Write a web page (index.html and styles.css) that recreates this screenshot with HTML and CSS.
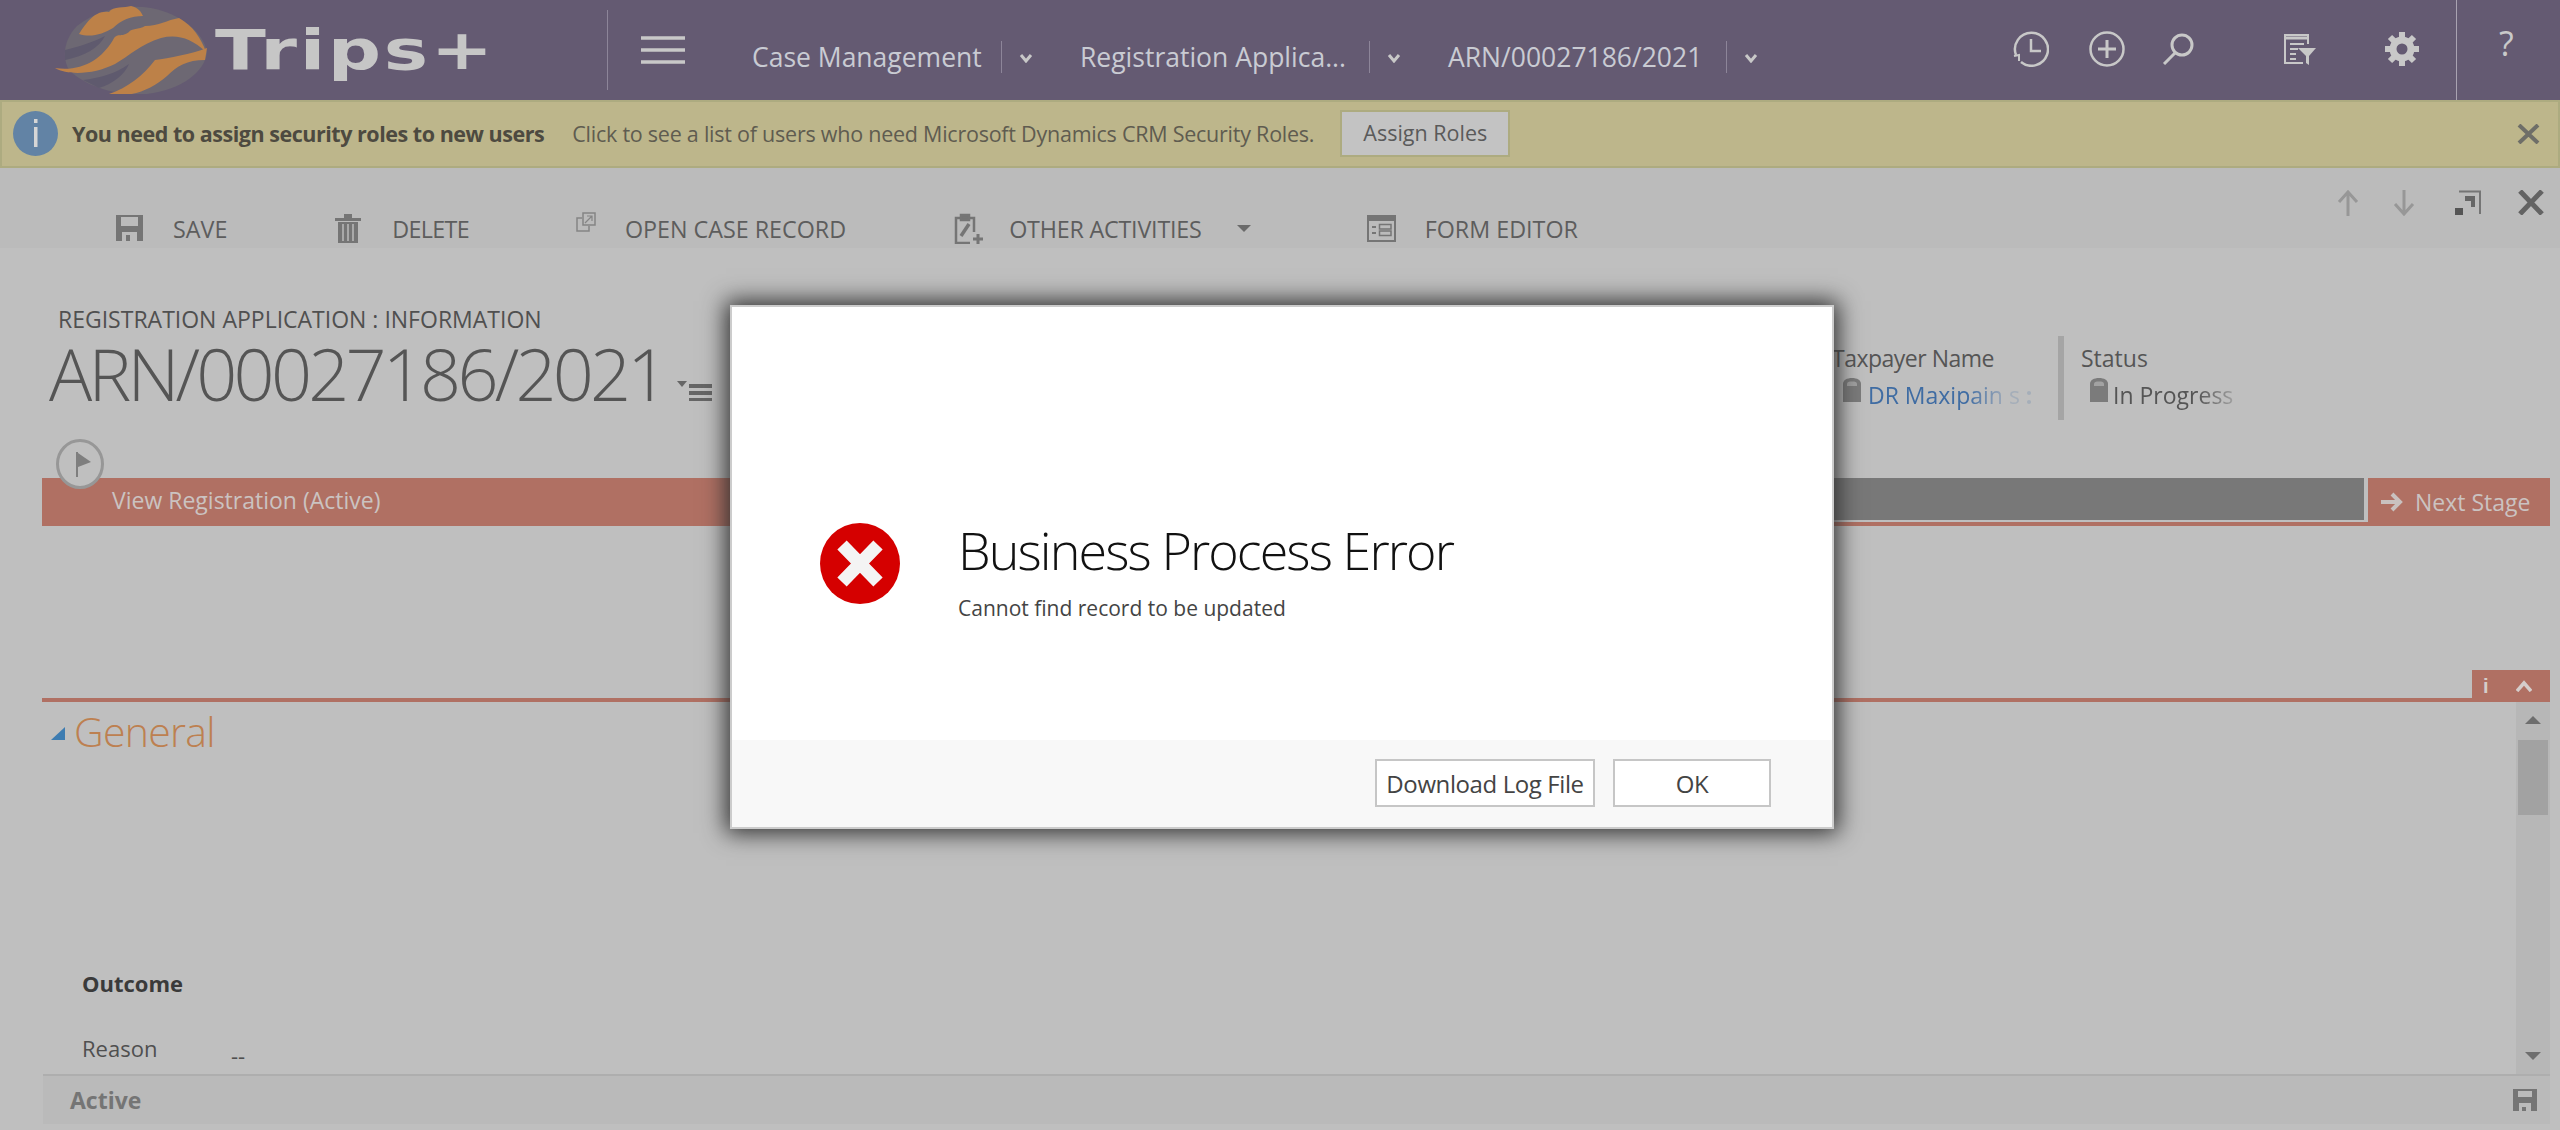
FILE: index.html
```html
<!DOCTYPE html>
<html>
<head>
	<title>ARN/00027186/2021</title>
	<link rel="stylesheet" href="styles.css">
</head>
<body>
	<header class="topbar">
		<div class="logo">
			<svg class="logo-globe" width="152" height="88" viewBox="0 0 152 88">
				<path d="M22 20C42 4 70 -2 96 2C126 8 148 26 152 46C150 66 126 84 92 88C60 90 30 80 14 64C6 50 10 32 22 20Z" fill="#6d6873"/>
				<path d="M0 62C26 66 46 54 58 34C62 26 66 32 74 26C76 22 84 24 90 20C104 20 112 14 124 12C138 20 146 32 151 46C136 32 122 28 106 32C86 38 74 50 60 58C40 68 14 70 0 62Z" fill="#bd8148"/>
				<path d="M54 88C72 82 88 70 100 54C114 52 136 48 152 42L150 54C132 54 122 60 112 70C96 84 76 92 54 88Z" fill="#bd8148"/>
				<path d="M24 28C32 16 40 4 54 6C58 0 70 2 76 0C84 2 86 6 88 10C76 10 66 14 58 22C48 28 36 32 24 28Z" fill="#bd8148"/>
				<path d="M10 44C26 40 38 36 50 30C44 42 30 50 10 54Z" fill="#5f5a6e"/>
				<path d="M28 74C44 72 60 68 74 58C70 68 58 78 44 82Z" fill="#5f5a6e"/>
			</svg>
			<span class="logo-text">Trips+</span>
		</div>
		<div class="topbar-divider"></div>
		<svg class="hamburger" width="44" height="28" viewBox="0 0 44 28">
			<path d="M0 2H44M0 14H44M0 26H44" stroke="#c8c8c8" stroke-width="3.5"/>
		</svg>
		<nav class="crumbs">
			<span class="crumb crumb-case">Case Management</span>
			<span class="crumb-sep"></span>
			<svg class="crumb-chev" width="14" height="10" viewBox="0 0 14 10"><path d="M2 2L7 8L12 2" fill="none" stroke="#c8c8c8" stroke-width="3"/></svg>
			<span class="crumb crumb-reg">Registration Applica...</span>
			<span class="crumb-sep"></span>
			<svg class="crumb-chev" width="14" height="10" viewBox="0 0 14 10"><path d="M2 2L7 8L12 2" fill="none" stroke="#c8c8c8" stroke-width="3"/></svg>
			<span class="crumb crumb-arn">ARN/00027186/2021</span>
			<span class="crumb-sep"></span>
			<svg class="crumb-chev" width="14" height="10" viewBox="0 0 14 10"><path d="M2 2L7 8L12 2" fill="none" stroke="#c8c8c8" stroke-width="3"/></svg>
		</nav>
		<div class="top-tools">
			<svg class="tool tool-clock" width="36" height="36" viewBox="0 0 36 36" fill="none" stroke="#c8c8c8" stroke-width="2.5">
				<path d="M3 24A16.500 16.500 0 1 1 8 31"/><path d="M1 25L6 24L6 30" stroke-width="2"/><path d="M18 8V20H28"/>
			</svg>
			<svg class="tool tool-plus" width="36" height="36" viewBox="0 0 36 36" fill="none" stroke="#c8c8c8" stroke-width="2.5">
				<circle cx="18" cy="18" r="16.500"/><path d="M18 9V27M9 18H27" stroke-width="3"/>
			</svg>
			<svg class="tool tool-search" width="32" height="32" viewBox="0 0 32 32" fill="none" stroke="#c8c8c8" stroke-width="3">
				<circle cx="20" cy="12" r="10"/><path d="M13 20L2 31"/>
			</svg>
			<svg class="tool tool-filter" width="33" height="31" viewBox="0 0 33 31" fill="none" stroke="#c8c8c8" stroke-width="2">
				<path d="M25 10V1H2V29H20"/><path d="M2 4H25" stroke-width="3"/><path d="M7 10H21M7 15H15M7 20H13M7 25H13"/>
				<path d="M15 14H33L26 22V31L23 29V22Z" fill="#c8c8c8" stroke="none"/>
			</svg>
			<svg class="tool tool-gear" width="34" height="34" viewBox="0 0 34 34" fill="none" stroke="#c8c8c8">
				<circle cx="17" cy="17" r="9" stroke-width="7"/>
				<path d="M17 0V6M17 28V34M0 17H6M28 17H34M5 5L9.200 9.200M24.800 24.800L29 29M29 5L24.800 9.200M9.200 24.800L5 29" stroke-width="6"/>
			</svg>
			<div class="tool-divider"></div>
			<span class="help">?</span>
		</div>
	</header>

	<section class="notice">
		<svg class="notice-icon" width="45" height="45" viewBox="0 0 45 45">
			<circle cx="22.500" cy="22.500" r="22.500" fill="#6283a5"/>
			<rect x="21" y="8" width="3.500" height="4" fill="#d6d6d6"/>
			<rect x="21" y="16" width="3.500" height="20" fill="#d6d6d6"/>
		</svg>
		<strong class="notice-title">You need to assign security roles to new users</strong>
		<span class="notice-text">Click to see a list of users who need Microsoft Dynamics CRM Security Roles.</span>
		<button class="notice-btn">Assign Roles</button>
		<svg class="notice-close" width="23" height="20" viewBox="0 0 23 20"><path d="M2 1L21 19M21 1L2 19" stroke="#6e6e68" stroke-width="4"/></svg>
	</section>

	<div class="cmdbar">
		<div class="cmd cmd-save">
			<svg width="29" height="28" viewBox="0 0 29 28"><path d="M1 1H28V27H1Z" fill="#757575"/><rect x="6" y="3" width="17" height="9" fill="#bbb"/><rect x="7" y="18" width="15" height="9" fill="#bbb"/><rect x="11" y="21" width="4" height="6" fill="#757575"/></svg>
			<span>SAVE</span>
		</div>
		<div class="cmd cmd-delete">
			<svg width="26" height="30" viewBox="0 0 26 30"><path d="M0 5H26V8H0ZM9 1H17V5H9Z" fill="#757575"/><path d="M3 9H23V30H3Z" fill="#757575"/><path d="M8 11V28M13 11V28M18 11V28" stroke="#bbb" stroke-width="1.500"/></svg>
			<span>DELETE</span>
		</div>
		<div class="cmd cmd-open">
			<svg class="open-icon" width="20" height="20" viewBox="0 0 20 20" fill="none" stroke="#858585" stroke-width="1.500"><path d="M6 6H1V19H13V14"/><path d="M7 1H19V13H7Z"/><path d="M9 11L16 4M11 4H16V9" stroke-width="1.200"/></svg>
			<span>OPEN CASE RECORD</span>
		</div>
		<div class="cmd cmd-other">
			<svg width="29" height="32" viewBox="0 0 29 32" fill="none" stroke="#757575" stroke-width="2.500"><path d="M7 6H2V31H16M20 20V6H15"/><path d="M7 3H15V8H7Z" fill="#757575"/><path d="M7 24L15 12" stroke-width="3.500"/><path d="M24 22V32M19 27H29" stroke-width="3"/></svg>
			<span>OTHER ACTIVITIES</span>
			<i class="cmd-caret"></i>
		</div>
		<div class="cmd cmd-form">
			<svg width="29" height="27" viewBox="0 0 29 27"><path d="M0 0H29V27H0Z" fill="#757575"/><path d="M2 6H27V25H2Z" fill="#bbb"/><path d="M5 11H9V13H5ZM5 17H9V19H5Z" fill="#757575"/><path d="M12.500 9.500H24V14H12.500ZM12.500 16H24V20.500H12.500Z" fill="none" stroke="#757575" stroke-width="1.500"/></svg>
			<span>FORM EDITOR</span>
		</div>
		<div class="cmd-nav">
			<svg width="22" height="26" viewBox="0 0 22 26" fill="none" stroke="#979797" stroke-width="3"><path d="M11 26V3M2 12L11 2L20 12"/></svg>
			<svg width="22" height="26" viewBox="0 0 22 26" fill="none" stroke="#979797" stroke-width="3"><path d="M11 0V23M2 14L11 24L20 14"/></svg>
			<svg class="nav-expand" width="26" height="25" viewBox="0 0 26 25"><path d="M4 1.500H25V24" fill="none" stroke="#757575" stroke-width="2"/><path d="M10 6H20V17H16V11H10Z" fill="#666"/><path d="M0 18H8V25H0Z" fill="#555"/></svg>
			<svg class="nav-close" width="28" height="25" viewBox="0 0 28 25"><path d="M3 1L25 24M25 1L3 24" stroke="#636363" stroke-width="5"/></svg>
		</div>
	</div>

	<div class="form-head">
		<div class="head-left">
			<div class="entity-name">REGISTRATION APPLICATION : INFORMATION</div>
			<div class="record-row">
				<div class="record-title">ARN/00027186/2021</div>
				<svg class="record-menu" width="35" height="20" viewBox="0 0 35 20"><path d="M0 0H10L5 6Z" fill="#666"/><path d="M12 3H35V7H12ZM12 10H35V14H12ZM12 17H35V21H12Z" fill="#666"/></svg>
			</div>
			<svg class="flag-circle" width="48" height="50" viewBox="0 0 48 50"><ellipse cx="24" cy="25" rx="22.500" ry="23.500" fill="#bfbfbf" stroke="#979797" stroke-width="3"/><path d="M21 13V38" stroke="#7e7e7e" stroke-width="2"/><path d="M22 14L35 23L22 28Z" fill="#7e7e7e"/></svg>
		</div>
		<div class="head-fields">
			<div class="field field-taxpayer">
				<div class="field-label">Taxpayer Name</div>
				<div class="field-value">
					<svg class="lock" width="18" height="24" viewBox="0 0 18 24"><path d="M0 10V6C0 2 4 0 9 0C14 0 18 2 18 6V24H0Z" fill="#7b7b7b"/><path d="M4 8V6C4 4 6 3.500 9 3.500C12 3.500 14 4 14 6V8Z" fill="#a2a2a2"/></svg>
					<span class="taxpayer-link">DR Maxipain s <b class="faint">:</b></span>
				</div>
			</div>
			<div class="field-sep"></div>
			<div class="field field-status">
				<div class="field-label">Status</div>
				<div class="field-value">
					<svg class="lock" width="18" height="24" viewBox="0 0 18 24"><path d="M0 10V6C0 2 4 0 9 0C14 0 18 2 18 6V24H0Z" fill="#7b7b7b"/><path d="M4 8V6C4 4 6 3.500 9 3.500C12 3.500 14 4 14 6V8Z" fill="#a2a2a2"/></svg>
					<span class="status-text">In Progress</span>
				</div>
			</div>
		</div>
	</div>

	<div class="process">
		<div class="stage-active">View Registration (Active)</div>
		<div class="stage-rest"></div>
		<div class="stage-next">
			<svg width="22" height="20" viewBox="0 0 22 20" fill="none" stroke="#c9c1bf" stroke-width="4"><path d="M0 10H19M11 2L19 10L11 18"/></svg>
			<span>Next Stage</span>
		</div>
	</div>

	<div class="tabs-gap">
		<div class="tab-tools">
			<span class="tab-i">i</span>
			<svg width="16" height="12" viewBox="0 0 16 12" fill="none" stroke="#d5cdcb" stroke-width="3.500"><path d="M1 11L8 3L15 11"/></svg>
		</div>
	</div>

	<div class="form-body">
		<main class="section">
			<div class="section-head">
				<i class="section-tri"></i>
				<h2>General</h2>
			</div>
			<div class="outcome">Outcome</div>
			<div class="reason-row">
				<span class="reason-label">Reason</span>
				<span class="reason-value">--</span>
			</div>
		</main>
		<aside class="scrollbar">
			<i class="arrow-up"></i>
			<div class="thumb"></div>
			<i class="arrow-down"></i>
		</aside>
	</div>

	<footer class="statusbar">
		<span class="status-label">Active</span>
		<svg width="24" height="22" viewBox="0 0 24 22"><path d="M0 0H24V22H0Z" fill="#757575"/><rect x="5" y="2" width="14" height="6" fill="#bbb"/><rect x="6" y="14" width="12" height="8" fill="#bbb"/><rect x="9" y="18" width="4" height="4" fill="#757575"/></svg>
	</footer>

	<div class="dialog">
		<div class="dialog-body">
			<svg class="error-icon" width="80" height="81" viewBox="0 0 80 81">
				<ellipse cx="40" cy="40.500" rx="40" ry="40.500" fill="#d50000"/>
				<path d="M22 22L58 59M58 22L22 59" stroke="#f4f4f4" stroke-width="13"/>
			</svg>
			<div class="dialog-copy">
				<div class="dialog-title">Business Process Error</div>
				<div class="dialog-msg">Cannot find record to be updated</div>
			</div>
		</div>
		<div class="dialog-foot">
			<button class="dialog-btn btn-log">Download Log File</button>
			<button class="dialog-btn btn-ok">OK</button>
		</div>
	</div>
</body>
</html>
```

FILE: styles.css
```css
body {
	margin: 0;
	width: 2560px;
	height: 1130px;
	overflow: hidden;
	position: relative;
	background-color: #bfbfbf;
	font-family: "Open Sans", "Noto Sans", sans-serif;
	color: #4c4c4c;
}

svg {
	display: block;
	flex: none;
}

/* top bar */
.topbar {
	height: 100px;
	background-color: #645a72;
	display: flex;
	align-items: center;
}

.topbar > * {
	flex: none;
}

.logo {
	width: 607px;
	height: 100px;
	padding-left: 55px;
	box-sizing: border-box;
	display: flex;
	align-items: center;
}

.logo-text {
	margin-left: 8px;
	margin-top: -2px;
	font-family: "DejaVu Sans", sans-serif;
	font-weight: bold;
	font-size: 56px;
	letter-spacing: 2px;
	color: #c6c6c6;
	transform: scaleX(1.33);
	transform-origin: left center;
}

.topbar-divider {
	width: 1px;
	height: 80px;
	background-color: #8d8599;
}

.hamburger {
	margin-left: 33px;
}

.crumbs {
	display: flex;
	align-items: center;
	margin-left: 67px;
	margin-top: 14px;
	height: 32px;
}

.crumb {
	font-size: 26.500px;
	color: #c9cbd3;
	white-space: nowrap;
}

.crumb-case { width: 249px; }
.crumb-reg { width: 289px; }
.crumb-arn { width: 278px; }

.crumb-sep {
	width: 1px;
	height: 32px;
	background-color: #8d8599;
}

.crumb-chev {
	margin: 2px 47px 0 17px;
}

.top-tools {
	flex: 1;
	height: 100px;
	display: flex;
	align-items: center;
}

.tool-clock { margin-left: 208px; }
.tool-plus { margin-left: 40px; }
.tool-search { margin-left: 37px; }
.tool-filter { margin-left: 89px; }
.tool-gear { margin-left: 69px; }

.top-tools svg {
	margin-top: -2px;
}

.tool-divider {
	width: 1px;
	height: 100px;
	background-color: #a9a3b1;
	margin-left: 37px;
}

.help {
	margin-left: 42px;
	margin-top: -14px;
	font-size: 34px;
	color: #c9c9c9;
}

/* notification */
.notice {
	height: 68px;
	box-sizing: border-box;
	background-color: #bdb68b;
	border: 2px solid #adab80;
	display: flex;
	align-items: center;
	padding-left: 11px;
	padding-bottom: 1px;
}

.notice-title {
	margin-left: 14px;
	font-size: 21.500px;
	letter-spacing: -0.47px;
	color: #4d4a40;
}

.notice-text {
	margin-left: 28px;
	font-size: 21.500px;
	letter-spacing: -0.24px;
	color: #5f5c50;
}

.notice-btn {
	width: 170px;
	height: 47px;
	margin-left: 26px;
	background-color: #c3c3c3;
	border: 2px solid #adab80;
	font-family: inherit;
	font-size: 21.500px;
	color: #5a5a5a;
	padding: 0 0 2px;
}

.notice-close {
	margin-left: auto;
	margin-right: 18px;
}

/* command bar */
.cmdbar {
	height: 80px;
	background-color: #bbbbbb;
	display: flex;
	align-items: flex-end;
	padding-bottom: 3px;
	box-sizing: border-box;
	position: relative;
}

.cmd {
	display: flex;
	align-items: center;
	gap: 29px;
	font-size: 23.300px;
	color: #5d5d5d;
}

.cmd span {
	margin-top: 2px;
}

.cmd-save { margin-left: 115px; }
.cmd-delete { margin-left: 108px; gap: 31px; letter-spacing: -0.7px; }
.cmd-open { margin-left: 107px; }
.cmd-other { margin-left: 108px; gap: 26px; letter-spacing: -0.2px; }
.cmd-form { margin-left: 116px; }

.open-icon {
	margin-top: -12px;
}

.cmd-caret {
	width: 0;
	height: 0;
	margin-left: 9px;
	border-left: 7px solid transparent;
	border-right: 7px solid transparent;
	border-top: 7px solid #6a6a6a;
}

.cmd-nav {
	margin-left: auto;
	margin-right: 15px;
	margin-bottom: 29px;
	display: flex;
	gap: 34px;
}

.nav-expand { margin-left: 6px; }
.nav-close { margin-left: 2px; }

/* record header */
.form-head {
	height: 230px;
	display: flex;
	position: relative;
}

.head-left {
	width: 1790px;
	padding-left: 58px;
	box-sizing: border-box;
}

.entity-name {
	margin-top: 57px;
	font-size: 23px;
	line-height: 28px;
	color: #505050;
}

.record-row {
	display: flex;
	align-items: flex-end;
	margin-left: -9px;
	height: 75px;
}

.record-title {
	font-size: 72px;
	font-weight: 300;
	line-height: 70px;
	letter-spacing: -3.800px;
	color: #555555;
	white-space: nowrap;
	width: 628px;
}

.record-menu {
	margin-bottom: 7px;
}

.flag-circle {
	margin-top: 31px;
	margin-left: -2px;
}

.head-fields {
	display: flex;
	padding-top: 88px;
	align-items: flex-start;
}

.field {
	font-size: 23px;
}

.field-label {
	color: #555555;
	line-height: 44px;
}

.field-value {
	display: flex;
	align-items: flex-start;
	height: 40px;
	line-height: 30px;
}

.field-taxpayer { width: 223px; padding-left: 45px; }
.field-taxpayer .field-label { margin-left: -3px; letter-spacing: -0.5px; }
.field-taxpayer .field-value { margin-left: 8px; }
.field-status { padding-left: 17px; }
.field-status .field-value { padding-left: 9px; }

.lock {
	margin-right: 7px;
	margin-top: -2px;
}

.taxpayer-link {
	color: #3f6ca3;
	white-space: nowrap;
	-webkit-mask-image: linear-gradient(90deg, #000 60%, rgba(0, 0, 0, 0.2) 85%);
	mask-image: linear-gradient(90deg, #000 60%, rgba(0, 0, 0, 0.2) 85%);
}

.faint {
	font-weight: bold;
}

.status-text {
	color: #555555;
	white-space: nowrap;
	margin-left: -2px;
	-webkit-mask-image: linear-gradient(90deg, #000 70%, rgba(0, 0, 0, 0.3) 100%);
	mask-image: linear-gradient(90deg, #000 70%, rgba(0, 0, 0, 0.3) 100%);
}

.field-sep {
	width: 6px;
	height: 84px;
	background-color: #a5a5a5;
}

/* process bar */
.process {
	height: 48px;
	margin-left: 42px;
	margin-right: 10px;
	display: flex;
	background: linear-gradient(#b07063, #b07063) bottom / 100% 4px no-repeat;
}

.stage-active {
	width: 1200px;
	height: 44px;
	background-color: #b07063;
	padding-left: 70px;
	font-size: 23px;
	line-height: 44px;
	color: #cbc3c1;
}

.stage-rest {
	flex: 1;
	height: 42px;
	background-color: #787878;
}

.stage-next {
	width: 182px;
	height: 48px;
	margin-left: 4px;
	background-color: #b07063;
	display: flex;
	align-items: center;
	gap: 12px;
	padding-left: 13px;
	box-sizing: border-box;
	font-size: 23px;
	color: #cbc3c1;
}

/* section */
.tabs-gap {
	height: 176px;
	margin-left: 42px;
	margin-right: 10px;
	box-sizing: border-box;
	border-bottom: 4px solid #b07063;
	display: flex;
	justify-content: flex-end;
	align-items: flex-end;
}

.tab-tools {
	width: 78px;
	height: 32px;
	background-color: #b07063;
	display: flex;
	align-items: center;
	gap: 28px;
	padding-left: 11px;
	box-sizing: border-box;
	margin-bottom: -4px;
}

.tab-i {
	width: 5px;
	font-family: "Liberation Sans", sans-serif;
	font-weight: bold;
	font-size: 20px;
	color: #d5cdcb;
}

.form-body {
	height: 372px;
	margin-left: 42px;
	margin-right: 10px;
	display: flex;
	overflow: hidden;
}

.section {
	flex: 1;
}

.section-head {
	display: flex;
	align-items: center;
	height: 60px;
	padding-left: 9px;
}

.section-tri {
	width: 0;
	height: 0;
	margin-top: 2px;
	border-left: 14px solid transparent;
	border-bottom: 13px solid #3d7cb1;
}

.section-head h2 {
	margin: -2px 0 0 9px;
	font-size: 41px;
	font-weight: 300;
	letter-spacing: -0.7px;
	color: #bd8050;
}

.outcome {
	margin: 206px 0 0 40px;
	font-size: 22px;
	line-height: 30px;
	font-weight: bold;
	color: #3a3a3a;
}

.reason-row {
	display: flex;
	margin: 35px 0 0 40px;
	font-size: 22px;
	line-height: 30px;
	color: #4f4f4f;
}

.reason-label {
	width: 149px;
}

.reason-value {
	margin-top: 7px;
}

.scrollbar {
	width: 34px;
	background-color: #b7b7b7;
	display: flex;
	flex-direction: column;
	align-items: center;
}

.arrow-up {
	margin-top: 14px;
	border-left: 8px solid transparent;
	border-right: 8px solid transparent;
	border-bottom: 8px solid #6e6e6e;
}

.thumb {
	width: 30px;
	height: 75px;
	margin-top: 16px;
	background-color: #a2a2a2;
}

.arrow-down {
	margin-top: auto;
	margin-bottom: 14px;
	border-left: 8px solid transparent;
	border-right: 8px solid transparent;
	border-top: 8px solid #6e6e6e;
}

/* status bar */
.statusbar {
	height: 50px;
	margin-left: 43px;
	margin-right: 10px;
	box-sizing: border-box;
	border-top: 2px solid #aeaeae;
	background-color: #bababa;
	display: flex;
	align-items: center;
	justify-content: space-between;
	padding: 0 13px 0 27px;
}

.status-label {
	font-size: 23px;
	font-weight: bold;
	color: #757575;
}

/* error dialog */
.dialog {
	position: absolute;
	left: 730px;
	top: 305px;
	width: 1104px;
	height: 524px;
	box-sizing: border-box;
	border: 2px solid #cccccc;
	background-color: #ffffff;
	box-shadow: 0 0 22px 4px #2e2e2e;
	display: flex;
	flex-direction: column;
}

.dialog-body {
	height: 433px;
	display: flex;
	align-items: center;
	padding-left: 88px;
	box-sizing: border-box;
	padding-top: 80px;
}

.dialog-copy {
	margin-left: 58px;
	margin-top: 10px;
}

.dialog-title {
	font-size: 52px;
	font-weight: 300;
	line-height: 70px;
	letter-spacing: -1.900px;
	color: #111111;
}

.dialog-msg {
	font-size: 21px;
	line-height: 30px;
	margin-top: 8px;
	color: #444444;
}

.dialog-foot {
	flex: 1;
	background-color: #f8f8f8;
	display: flex;
	justify-content: flex-end;
	align-items: flex-start;
	gap: 18px;
	padding: 19px 61px 0 0;
}

.dialog-btn {
	height: 48px;
	background-color: #ffffff;
	border: 2px solid #c6c6c6;
	font-family: inherit;
	font-size: 24px;
	letter-spacing: -0.4px;
	color: #444444;
	padding: 0;
}

.btn-log { width: 220px; }
.btn-ok { width: 158px; }
```
